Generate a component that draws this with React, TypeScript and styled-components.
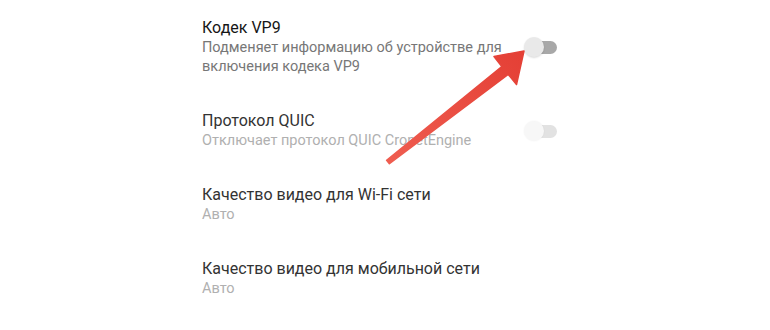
import React from 'react';
import styled, { createGlobalStyle } from 'styled-components';

const GlobalStyle = createGlobalStyle`
  html, body {
    margin: 0;
    padding: 0;
    background: #ffffff;
  }
  body {
    font-family: Roboto, "Noto Sans", "Liberation Sans", sans-serif;
  }
`;

const Page = styled.div`
  position: relative;
  width: 770px;
  height: 330px;
  overflow: hidden;
  background: #fff;
`;

const List = styled.div`
  display: flex;
  flex-direction: column;
  width: 356px;
  padding-left: 202px;
`;

const Row = styled.div`
  display: flex;
  align-items: center;
  justify-content: space-between;
  padding: 18px 0 17px;
`;

const TextBlock = styled.div`
  display: flex;
  flex-direction: column;
  width: 300px;
`;

const Title = styled.div<{ $strong?: boolean }>`
  font-size: 16px;
  line-height: 20px;
  color: ${(p) => (p.$strong ? '#161616' : '#333333')};
  white-space: nowrap;
`;

const Summary = styled.div<{ $strong?: boolean }>`
  font-size: 14.5px;
  line-height: 19px;
  color: ${(p) => (p.$strong ? '#777777' : '#b0b0b0')};
`;

const Switch = styled.div<{ $disabled?: boolean }>`
  position: relative;
  flex: none;
  width: 33px;
  height: 20px;
  margin-right: 1px;

  &::before {
    content: '';
    position: absolute;
    left: 3px;
    right: 0;
    top: 4px;
    height: 13px;
    border-radius: 7px;
    background: ${(p) => (p.$disabled ? '#e2e2e2' : '#a8a8a8')};
  }

  &::after {
    content: '';
    position: absolute;
    left: 0;
    top: 0;
    width: 20px;
    height: 20px;
    border-radius: 50%;
    background: ${(p) => (p.$disabled ? '#f7f7f7' : '#e9e9e9')};
    box-shadow: ${(p) =>
      p.$disabled ? '0 0 2px rgba(0,0,0,0.06)' : '0 1px 2px rgba(0,0,0,0.14)'};
  }
`;

const Arrow = styled.svg`
  position: absolute;
  left: 0;
  top: 0;
  pointer-events: none;
`;

type Item = {
  title: string;
  summary: string;
  strong?: boolean;
  toggle?: 'on' | 'disabled';
};

const items: Item[] = [
  {
    title: 'Кодек VP9',
    summary: 'Подменяет информацию об устройстве для включения кодека VP9',
    strong: true,
    toggle: 'on',
  },
  {
    title: 'Протокол QUIC',
    summary: 'Отключает протокол QUIC CronetEngine',
    toggle: 'disabled',
  },
  { title: 'Качество видео для Wi-Fi сети', summary: 'Авто' },
  { title: 'Качество видео для мобильной сети', summary: 'Авто' },
];

const App: React.FC = () => {
  return (
    <Page>
      <GlobalStyle />
      <List>
        {items.map((it) => (
          <Row key={it.title}>
            <TextBlock>
              <Title $strong={it.strong}>{it.title}</Title>
              <Summary $strong={it.strong}>{it.summary}</Summary>
            </TextBlock>
            {it.toggle && <Switch $disabled={it.toggle === 'disabled'} />}
          </Row>
        ))}
      </List>
      <Arrow width="770" height="330" viewBox="0 0 770 330">
        <defs>
          <linearGradient id="arrowFill" x1="388" y1="162" x2="524" y2="51" gradientUnits="userSpaceOnUse">
            <stop offset="0" stopColor="#ef5d50" />
            <stop offset="1" stopColor="#e43f35" />
          </linearGradient>
        </defs>
        <polygon
          points="386.6,160.3 501.8,66.6 494,56.5 524,51 516.5,84.5 508.2,74.4 389.4,163.7"
          fill="url(#arrowFill)"
          stroke="url(#arrowFill)"
          strokeWidth="1.5"
          strokeLinejoin="round"
        />
      </Arrow>
    </Page>
  );
};

export default App;
